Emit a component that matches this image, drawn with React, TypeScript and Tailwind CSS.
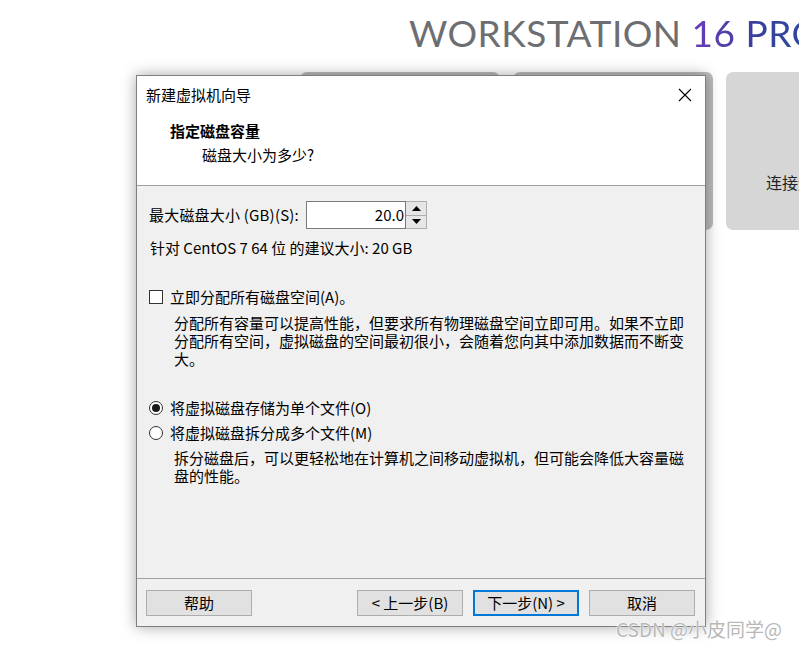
import React from "react";

const FONT = '"Noto Sans CJK SC", "Noto Sans", sans-serif';

function Btn({ children, primary }: { children: React.ReactNode; primary?: boolean }) {
  return (
    <div
      className={
        "w-[106px] h-[26px] flex items-center justify-center bg-[#e1e1e1] text-[15px] leading-[20px] text-black " +
        (primary ? "border-2 border-[#0078d7]" : "border border-[#adadad]")
      }
    >
      {children}
    </div>
  );
}

function Radio({ checked }: { checked?: boolean }) {
  return (
    <div className="w-[14px] h-[14px] rounded-full border border-[#333333] bg-white flex items-center justify-center">
      {checked && <div className="w-[8px] h-[8px] rounded-full bg-[#1a1a1a]" />}
    </div>
  );
}

export default function App() {
  return (
    <div className="relative w-[799px] h-[648px] overflow-hidden bg-white" style={{ fontFamily: FONT }}>
      {/* background app */}
      <div className="flex flex-col">
        <div className="h-[72px] flex items-start pl-[409px] pt-[11px]">
          <div
            className="whitespace-nowrap text-[37px] leading-[44px] tracking-[0.5px]"
            style={{ fontFamily: '"Lato", "Open Sans", sans-serif' }}
          >
            <span className="text-[#6d6e71]">WORKSTATION </span>
            <span className="bg-gradient-to-r from-[#6a3cb8] via-[#36409c] to-[#2c4a9c] bg-clip-text text-transparent">
              16 PRO
            </span>
          </div>
        </div>
        <div className="flex pl-[300px] gap-[13px]">
          <div className="w-[200px] h-[158px] shrink-0 rounded-[7px] bg-[#b9b9b9]" />
          <div className="w-[200px] h-[158px] shrink-0 rounded-[7px] bg-[#bcbcbc]" />
          <div className="w-[200px] h-[158px] shrink-0 rounded-[7px] bg-[#d6d6d6] flex items-end pb-[37px] pl-[40px]">
            <span className="text-[16px] leading-[22px] text-[#222] whitespace-nowrap">连接远程服务器</span>
          </div>
        </div>
      </div>

      {/* dialog window */}
      <div className="absolute left-[136px] top-[75px] w-[570px] h-[552px] border border-[#7f7f7f] bg-[#f0f0f0] flex flex-col shadow-[0_0_14px_rgba(0,0,0,0.35)] text-black">
        <div className="bg-white flex flex-col">
          <div className="h-[38px] flex items-center justify-between pl-[9px] pr-[13px]">
            <span className="text-[15px] leading-[20px]">新建虚拟机向导</span>
            <svg width="14" height="14" viewBox="0 0 14 14">
              <path d="M1 1 L13 13 M13 1 L1 13" stroke="#000" strokeWidth="1.1" />
            </svg>
          </div>
          <div className="pl-[33px] pt-[7px] pb-[20px]">
            <div className="text-[15px] leading-[20px] font-bold">指定磁盘容量</div>
            <div className="text-[15px] leading-[20px] mt-[4px] pl-[32px]">磁盘大小为多少?</div>
          </div>
        </div>
        <div className="h-px bg-[#a0a0a0]" />

        <div className="flex-1 flex flex-col pl-[12px] pt-[15px] text-[15px] leading-[20px]">
          <div className="flex items-center h-[28px]">
            <span className="w-[157px] tracking-[0.2px]">最大磁盘大小 (GB)(S):</span>
            <div className="flex h-[28px]">
              <div className="w-[100px] h-[28px] border border-[#7a7a7a] bg-white flex items-center justify-end pr-[1px]">
                20.0
              </div>
              <div className="flex flex-col w-[21px] h-[28px] border border-[#adadad] border-l-0">
                <div className="flex-1 flex items-center justify-center bg-[#e6e6e6] border-b border-[#adadad]">
                  <svg width="9" height="5" viewBox="0 0 9 5">
                    <path d="M0 5 L4.5 0 L9 5 Z" fill="#000" />
                  </svg>
                </div>
                <div className="flex-1 flex items-center justify-center bg-[#e6e6e6]">
                  <svg width="9" height="5" viewBox="0 0 9 5">
                    <path d="M0 0 L4.5 5 L9 0 Z" fill="#000" />
                  </svg>
                </div>
              </div>
            </div>
          </div>
          <div className="mt-[9px] pl-[1px]">针对 CentOS 7 64 位 的建议大小: 20 GB</div>

          <div className="mt-[29px] flex items-center gap-[7px]">
            <div className="w-[14px] h-[14px] border border-[#333333] bg-white" />
            <span>立即分配所有磁盘空间(A)。</span>
          </div>
          <div className="mt-[7px] pl-[25px] pr-[18px] leading-[18px]">
            分配所有容量可以提高性能，但要求所有物理磁盘空间立即可用。如果不立即分配所有空间，虚拟磁盘的空间最初很小，会随着您向其中添加数据而不断变大。
          </div>

          <div className="mt-[30px] flex items-center gap-[7px]">
            <Radio checked />
            <span>将虚拟磁盘存储为单个文件(O)</span>
          </div>
          <div className="mt-[5px] flex items-center gap-[7px]">
            <Radio />
            <span>将虚拟磁盘拆分成多个文件(M)</span>
          </div>
          <div className="mt-[6px] pl-[25px] pr-[18px] leading-[18px]">
            拆分磁盘后，可以更轻松地在计算机之间移动虚拟机，但可能会降低大容量磁盘的性能。
          </div>
        </div>

        <div className="h-px bg-[#a0a0a0]" />
        <div className="h-[47px] flex items-start justify-between pl-[9px] pr-[10px] pt-[11px]">
          <Btn>帮助</Btn>
          <div className="flex gap-[10px]">
            <Btn>&lt; 上一步(B)</Btn>
            <Btn primary>下一步(N) &gt;</Btn>
            <Btn>取消</Btn>
          </div>
        </div>
      </div>

      {/* watermark */}
      <div
        className="absolute left-[616px] top-[616px] text-[19px] leading-[26px] text-[#b8b8b8] whitespace-nowrap"
        style={{ textShadow: "0 0 1px #fff, 0 0 2px #fff" }}
      >
        CSDN @小皮同学@
      </div>
    </div>
  );
}
